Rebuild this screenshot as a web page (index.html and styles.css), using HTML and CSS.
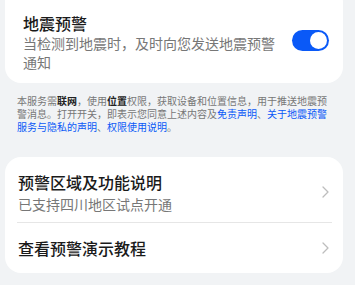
FILE: index.html
```html
<!DOCTYPE html>
<html lang="zh-CN">
<head>
    <meta charset="UTF-8">
    <meta name="viewport" content="width=device-width, initial-scale=1.0">
    <title>地震预警</title>
    <link rel="stylesheet" href="styles.css">
</head>
<body>
    <div class="page">
        <div class="card switch-card">
            <div class="switch-text">
                <div class="item-title">地震预警</div>
                <div class="item-desc">当检测到地震时，及时向您发送地震预警通知</div>
            </div>
            <div class="toggle on">
                <div class="toggle-knob"></div>
            </div>
        </div>

        <p class="notice">本服务需<b>联网</b>，使用<b>位置</b>权限，获取设备和位置信息，用于推送地震预警消息。打开开关，即表示您同意上述内容及<a href="#">免责声明</a>、<a href="#">关于地震预警服务与隐私的声明</a>、<a href="#">权限使用说明</a>。</p>

        <div class="card list-card">
            <div class="list-row">
                <div class="row-text">
                    <div class="item-title">预警区域及功能说明</div>
                    <div class="item-desc sub">已支持四川地区试点开通</div>
                </div>
                <svg class="chevron" width="7" height="12" viewBox="0 0 7 12">
                    <path d="M1 1l5 5-5 5" fill="none" stroke="#bdbdbd" stroke-width="1.3" stroke-linecap="round" stroke-linejoin="round"/>
                </svg>
            </div>
            <div class="divider"></div>
            <div class="list-row single">
                <div class="row-text">
                    <div class="item-title">查看预警演示教程</div>
                </div>
                <svg class="chevron" width="7" height="12" viewBox="0 0 7 12">
                    <path d="M1 1l5 5-5 5" fill="none" stroke="#bdbdbd" stroke-width="1.3" stroke-linecap="round" stroke-linejoin="round"/>
                </svg>
            </div>
        </div>
    </div>
</body>
</html>
```

FILE: styles.css
```css
body {
    margin: 0;
    background-color: #f1f3f5;
    font-family: "Noto Sans CJK SC", "Noto Sans", sans-serif;
    overflow: hidden;
}

.page {
    padding: 0 12px 0 5px;
    margin-top: -14px;
}

.card {
    background-color: #ffffff;
    border-radius: 16px;
}

.switch-card {
    display: flex;
    align-items: center;
    gap: 16px;
    padding: 26px 14px 12px 18px;
}

.switch-text {
    flex: 1;
}

.item-title {
    font-size: 16px;
    line-height: 22px;
    font-weight: 500;
    color: #1a1a1a;
}

.item-desc {
    font-size: 14px;
    line-height: 18.5px;
    color: #777;
}

.item-desc.sub {
    margin-top: 2px;
}

.toggle {
    width: 37px;
    height: 21px;
    border-radius: 11px;
    background-color: #ccc;
    display: flex;
    align-items: center;
    padding: 0 2px;
    box-sizing: border-box;
    margin-top: -3px;
}

.toggle.on {
    background-color: #0a59f7;
    justify-content: flex-end;
}

.toggle-knob {
    width: 17px;
    height: 17px;
    border-radius: 50%;
    background-color: #fff;
}

.notice {
    margin: 11px 8px 24px 12px;
    font-size: 10px;
    line-height: 13px;
    color: #777;
}

.notice b {
    color: #222;
    font-weight: 700;
}

.notice a {
    color: #0a59f7;
    text-decoration: none;
}

.list-card {
    padding: 0 11px 0 12px;
}

.list-row {
    display: flex;
    align-items: center;
    padding: 14px 3px 8px 1px;
}

.list-row.single {
    padding: 14px 3px 14px 1px;
}

.row-text {
    flex: 1;
}

.chevron {
    flex-shrink: 0;
}

.divider {
    height: 1px;
    background-color: #e6e6e6;
}
```
